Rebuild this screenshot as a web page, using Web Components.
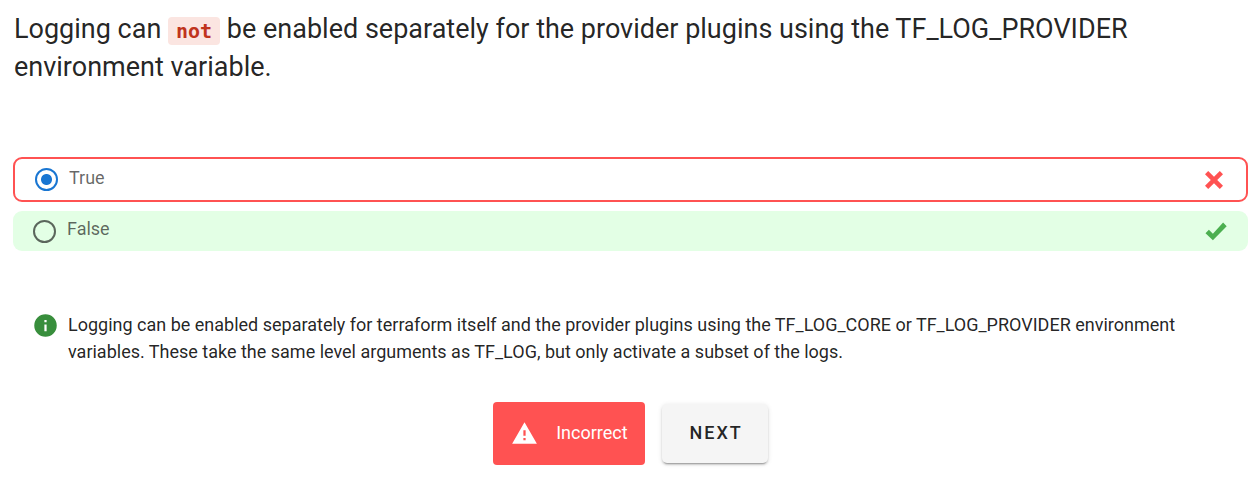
<!DOCTYPE html>
<html lang="en">
<head>
<meta charset="utf-8">
<meta name="viewport" content="width=device-width, initial-scale=1">
<title>Quiz question</title>
<style>
  body { margin: 0; background: #fff; color: rgba(0, 0, 0, 0.87); font-family: Roboto, sans-serif; font-size: 18px; }
</style>
</head>
<body>
<quiz-card>
  <quiz-question slot="question">Logging can <code-chip>not</code-chip> be enabled separately for the provider plugins using the TF_LOG_PROVIDER environment variable.</quiz-question>
  <quiz-answers slot="answers" options='[{"label":"True","state":"wrong","checked":true},{"label":"False","state":"right"}]'></quiz-answers>
  <quiz-explanation slot="explanation">Logging can be enabled separately for terraform itself and the provider plugins using the TF_LOG_CORE or TF_LOG_PROVIDER environment variables. These take the same level arguments as TF_LOG, but only activate a subset of the logs.</quiz-explanation>
  <quiz-result slot="actions">Incorrect</quiz-result>
  <quiz-button slot="actions">NEXT</quiz-button>
</quiz-card>

<template id="quiz-card">
  <style>
    :host { display: block; padding: 10px 8px 32px 13px; }
    main { display: flex; flex-direction: column; }
    .answers { margin-top: 71px; }
    .explanation { margin-top: 60px; }
    .actions { display: flex; justify-content: center; align-items: center; gap: 17px; margin-top: 37px; }
  </style>
  <main>
    <slot name="question"></slot>
    <div class="answers"><slot name="answers"></slot></div>
    <div class="explanation"><slot name="explanation"></slot></div>
    <div class="actions"><slot name="actions"></slot></div>
  </main>
</template>

<template id="quiz-question">
  <style>
    :host { display: block; padding-left: 1px; }
    h1 { margin: 0; font-size: 27px; font-weight: 400; line-height: 38px; }
  </style>
  <h1><slot></slot></h1>
</template>

<template id="code-chip">
  <style>
    :host { display: inline; }
    code { padding: 2px 8px; border-radius: 4px; background: #fbe5e1; color: #c0341d; font: 700 20px "DejaVu Sans Mono", monospace; }
  </style>
  <code><slot></slot></code>
</template>

<template id="quiz-answers">
  <style>
    :host { display: block; }
    fieldset { display: grid; gap: 9px; min-width: 0; margin: 0; padding: 0; border: 0; }
    label { display: flex; align-items: center; box-sizing: border-box; height: 40px; padding: 0 20px; border-radius: 9px; color: rgba(0, 0, 0, 0.6); cursor: pointer; }
    label.wrong { height: 45px; border: 2px solid #ff5252; }
    label.right { background: #e3ffe5; }
    input { appearance: none; box-sizing: border-box; flex: none; width: 23px; height: 23px; margin: 0 11px 0 0; border: 2px solid rgba(0, 0, 0, 0.6); border-radius: 50%; }
    input:checked { border-color: #1976d2; background: radial-gradient(circle, #1976d2 5px, transparent 6px); }
    .text { flex: 1; padding-bottom: 4px; line-height: 22px; }
    svg { flex: none; width: 24px; height: 24px; }
    .wrong svg { fill: #ff5252; }
    .right svg { fill: #4caf50; }
  </style>
  <fieldset aria-label="Answers"></fieldset>
</template>

<template id="quiz-explanation">
  <style>
    :host { display: flex; align-items: flex-start; gap: 9px; padding: 0 53px 0 19px; }
    svg { flex: none; width: 27px; height: 27px; margin-top: 1px; fill: #388e3c; }
    p { margin: 0; line-height: 27px; }
  </style>
  <svg viewBox="0 0 24 24" aria-hidden="true"><path d="M13 9h-2V7h2m0 10h-2v-6h2m-1-9A10 10 0 0 0 2 12a10 10 0 0 0 10 10 10 10 0 0 0 10-10A10 10 0 0 0 12 2z"/></svg>
  <p><slot></slot></p>
</template>

<template id="quiz-result">
  <style>
    :host { display: flex; align-items: center; gap: 18px; padding: 18px 17px 18px 18px; border-radius: 4px; background: #ff5252; color: #fff; line-height: 25px; }
    svg { width: 27px; height: 27px; fill: currentColor; }
    span { padding-bottom: 2px; }
  </style>
  <svg viewBox="0 0 24 24" aria-hidden="true"><path d="M13 14h-2V9h2m0 9h-2v-2h2M1 21h22L12 2 1 21z"/></svg>
  <span role="status"><slot></slot></span>
</template>

<template id="quiz-button">
  <style>
    :host { display: block; }
    button { height: 59px; padding: 0 25px 2px 28px; border: 0; border-radius: 5px; background: #f5f5f5; color: rgba(0, 0, 0, 0.87); font: 500 18px Roboto, sans-serif; letter-spacing: 2px; box-shadow: 0 3px 1px -2px rgba(0, 0, 0, 0.2), 0 2px 2px rgba(0, 0, 0, 0.14), 0 1px 5px rgba(0, 0, 0, 0.12); cursor: pointer; }
  </style>
  <button type="button"><slot></slot></button>
</template>

<script>
  function fill(host) {
    const root = host.attachShadow({ mode: "open" });
    root.append(document.getElementById(host.localName).content.cloneNode(true));
    return root;
  }

  const marks = {
    wrong: "M3 6.2 6.2 3 12 8.8 17.8 3 21 6.2 15.2 12 21 17.8 17.8 21 12 15.2 6.2 21 3 17.8 8.8 12z",
    right: "M1.5 14.2 4.9 10.8 8.9 14.8 19.1 3.6 22.7 7.2 8.9 21.2z"
  };

  class QuizAnswers extends HTMLElement {
    constructor() {
      super();
      const fieldset = fill(this).querySelector("fieldset");
      for (const option of JSON.parse(this.getAttribute("options"))) {
        const label = document.createElement("label");
        label.className = option.state;
        label.innerHTML = `<input type="radio" name="answer"><span class="text"></span>
          <svg viewBox="0 0 24 24" aria-hidden="true"><path d="${marks[option.state]}"/></svg>`;
        label.querySelector("input").checked = Boolean(option.checked);
        label.querySelector(".text").textContent = option.label;
        fieldset.append(label);
      }
    }
  }

  customElements.define("quiz-answers", QuizAnswers);
  customElements.define("quiz-card", class extends HTMLElement { constructor() { super(); fill(this); } });
  customElements.define("quiz-question", class extends HTMLElement { constructor() { super(); fill(this); } });
  customElements.define("code-chip", class extends HTMLElement { constructor() { super(); fill(this); } });
  customElements.define("quiz-explanation", class extends HTMLElement { constructor() { super(); fill(this); } });
  customElements.define("quiz-result", class extends HTMLElement { constructor() { super(); fill(this); } });
  customElements.define("quiz-button", class extends HTMLElement { constructor() { super(); fill(this); } });
</script>
</body>
</html>
